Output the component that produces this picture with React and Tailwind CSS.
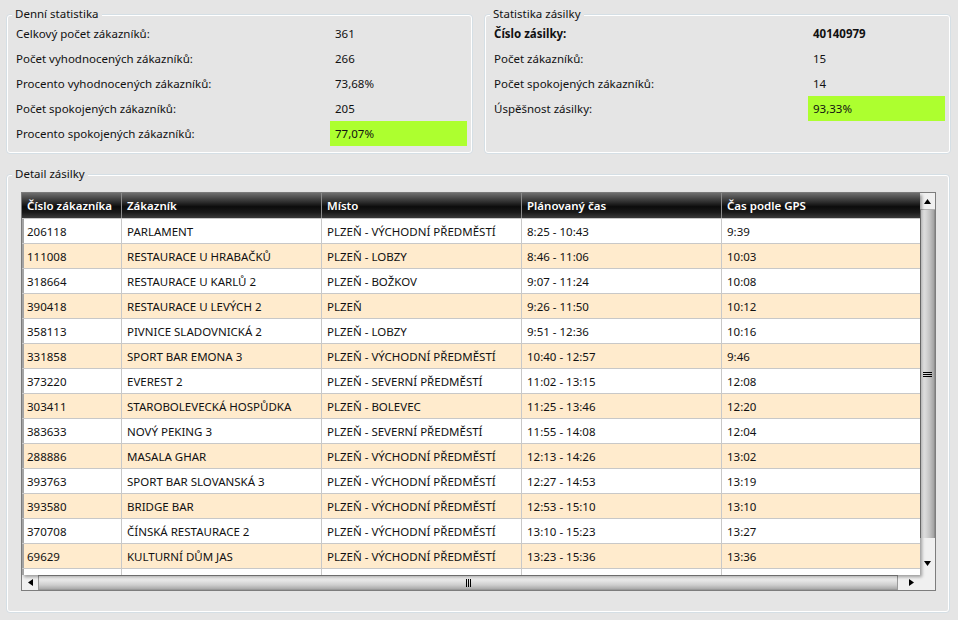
import React from "react";

const rows = [
  ["206118", "PARLAMENT", "PLZEŇ - VÝCHODNÍ PŘEDMĚSTÍ", "8:25 - 10:43", "9:39"],
  ["111008", "RESTAURACE U HRABAČKŮ", "PLZEŇ - LOBZY", "8:46 - 11:06", "10:03"],
  ["318664", "RESTAURACE U KARLŮ 2", "PLZEŇ - BOŽKOV", "9:07 - 11:24", "10:08"],
  ["390418", "RESTAURACE U LEVÝCH 2", "PLZEŇ", "9:26 - 11:50", "10:12"],
  ["358113", "PIVNICE SLADOVNICKÁ 2", "PLZEŇ - LOBZY", "9:51 - 12:36", "10:16"],
  ["331858", "SPORT BAR EMONA 3", "PLZEŇ - VÝCHODNÍ PŘEDMĚSTÍ", "10:40 - 12:57", "9:46"],
  ["373220", "EVEREST 2", "PLZEŇ - SEVERNÍ PŘEDMĚSTÍ", "11:02 - 13:15", "12:08"],
  ["303411", "STAROBOLEVECKÁ HOSPŮDKA", "PLZEŇ - BOLEVEC", "11:25 - 13:46", "12:20"],
  ["383633", "NOVÝ PEKING 3", "PLZEŇ - SEVERNÍ PŘEDMĚSTÍ", "11:55 - 14:08", "12:04"],
  ["288886", "MASALA GHAR", "PLZEŇ - VÝCHODNÍ PŘEDMĚSTÍ", "12:13 - 14:26", "13:02"],
  ["393763", "SPORT BAR SLOVANSKÁ 3", "PLZEŇ - VÝCHODNÍ PŘEDMĚSTÍ", "12:27 - 14:53", "13:19"],
  ["393580", "BRIDGE BAR", "PLZEŇ - VÝCHODNÍ PŘEDMĚSTÍ", "12:53 - 15:10", "13:10"],
  ["370708", "ČÍNSKÁ RESTAURACE 2", "PLZEŇ - VÝCHODNÍ PŘEDMĚSTÍ", "13:10 - 15:23", "13:27"],
  ["69629", "KULTURNÍ DŮM JAS", "PLZEŇ - VÝCHODNÍ PŘEDMĚSTÍ", "13:23 - 15:36", "13:36"],
  ["", "", "", "", ""],
];

function GroupBox({ title, className, children }) {
  return (
    <div className={`relative rounded-[4px] border border-[#d5dfe5] ${className}`}>
      <div className="h-full rounded-[3px] border border-white">{children}</div>
      <span className="absolute left-[5px] top-[-9px] bg-[#e5e5e5] px-[3px] text-[11.5px] leading-[16px] text-[#111]">
        {title}
      </span>
    </div>
  );
}

function StatRow({ label, value, green, bold }) {
  return (
    <div className={`flex h-[25px] items-center ${bold ? "font-bold" : ""}`}>
      <div className="w-[318px] shrink-0 pl-[4px] pt-[1px]">{label}</div>
      <div className={`flex h-full w-[137px] shrink-0 items-center pl-[5px] pt-[1px] ${green ? "bg-[#adff2f]" : ""}`}>{value}</div>
    </div>
  );
}

function Tri({ dir }) {
  const pts = {
    up: "0,5 7,5 3.5,0",
    down: "0,0 7,0 3.5,5",
    left: "5,0 5,7 0,3.5",
    right: "0,0 0,7 5,3.5",
  }[dir];
  const horiz = dir === "left" || dir === "right";
  return (
    <svg width={horiz ? 5 : 7} height={horiz ? 7 : 5} viewBox={horiz ? "0 0 5 7" : "0 0 7 5"}>
      <polygon points={pts} fill="#000" />
    </svg>
  );
}

const headers = ["Číslo zákazníka", "Zákazník", "Místo", "Plánovaný čas", "Čas podle GPS"];

function Table() {
  return (
    <div className="flex h-[399px] w-[915px] border border-[#7d7d7d] bg-[#f0f0f0]">
      <div className="flex w-[898px] shrink-0 flex-col">
        <div className="relative z-10 h-[382px] shrink-0 overflow-hidden bg-white shadow-[2px_2px_3px_rgba(0,0,0,0.35)]">
          <div className="flex h-[26px] border-b border-[#c8c8c8] bg-[linear-gradient(to_bottom,#6e6e6e_0%,#3c3c3c_28%,#0c0c0c_55%,#1a1a1a_78%,#3a3a3a_100%)] font-semibold text-white">
            <div className="flex w-[100px] shrink-0 items-center border-r border-[#8a8a8a] pl-[5px] pt-[1px]">{headers[0]}</div>
            <div className="flex w-[200px] shrink-0 items-center border-r border-[#8a8a8a] pl-[5px] pt-[1px]">{headers[1]}</div>
            <div className="flex w-[200px] shrink-0 items-center border-r border-[#8a8a8a] pl-[5px] pt-[1px]">{headers[2]}</div>
            <div className="flex w-[200px] shrink-0 items-center border-r border-[#8a8a8a] pl-[5px] pt-[1px]">{headers[3]}</div>
            <div className="flex flex-1 items-center pl-[5px] pt-[1px]">{headers[4]}</div>
          </div>
          {rows.map((r, i) => (
            <div
              key={i}
              className={`flex h-[25px] border-b border-[#c8c8c8] text-[#111] ${i % 2 ? "bg-[#ffebcd]" : "bg-white"}`}
            >
              <div className="flex w-[100px] shrink-0 items-center border-l-2 border-r border-l-[#a4a4a4] border-r-[#c8c8c8] pl-[3px] pt-[1px]">{r[0]}</div>
              <div className="flex w-[200px] shrink-0 items-center border-r border-[#c8c8c8] pl-[5px] pt-[1px]">{r[1]}</div>
              <div className="flex w-[200px] shrink-0 items-center border-r border-[#c8c8c8] pl-[5px] pt-[1px]">{r[2]}</div>
              <div className="flex w-[200px] shrink-0 items-center border-r border-[#c8c8c8] pl-[5px] pt-[1px]">{r[3]}</div>
              <div className="flex flex-1 items-center pl-[5px] pt-[1px]">{r[4]}</div>
            </div>
          ))}
        </div>
        <div className="flex h-[15px] shrink-0">
          <div className="flex w-[16px] shrink-0 items-center justify-center">
            <Tri dir="left" />
          </div>
          <div className="flex w-[860px] shrink-0 items-center justify-center gap-[1px] border border-[#9a9a9a] bg-[linear-gradient(to_bottom,#fafafa_0%,#e6e6e6_35%,#cdcdcd_70%,#a9a9a9_100%)]">
            <div className="h-[8px] w-[1px] bg-black" />
            <div className="h-[8px] w-[1px] bg-black" />
            <div className="h-[8px] w-[1px] bg-black" />
          </div>
          <div className="flex flex-1 items-center justify-center pl-[4px]">
            <Tri dir="right" />
          </div>
        </div>
      </div>
      <div className="flex w-[15px] shrink-0 flex-col">
        <div className="flex h-[17px] shrink-0 items-center justify-center border-b border-[#b0b0b0]">
          <Tri dir="up" />
        </div>
        <div className="flex h-[328px] shrink-0 flex-col items-center justify-center gap-[1px] border-x border-[#8f8f8f] bg-[linear-gradient(to_right,#f4f4f4_0%,#dcdcdc_30%,#c4c4c4_65%,#a2a2a2_100%)]">
          <div className="h-[1px] w-[9px] bg-black" />
          <div className="h-[1px] w-[9px] bg-black" />
          <div className="h-[1px] w-[9px] bg-black" />
        </div>
        <div className="flex h-[36px] shrink-0 items-end justify-center pb-[8px]">
          <Tri dir="down" />
        </div>
      </div>
    </div>
  );
}

export default function App() {
  return (
    <div className="h-[620px] w-[958px] overflow-hidden bg-[#e5e5e5] pl-[6px] pt-[14px] font-['Noto_Sans',sans-serif] text-[11.5px] text-[#111]">
      <div className="flex gap-[11px]">
        <GroupBox title="Denní statistika" className="h-[140px] w-[467px]">
          <div className="px-[4px] pt-[5px]">
            <StatRow label="Celkový počet zákazníků:" value="361" />
            <StatRow label="Počet vyhodnocených zákazníků:" value="266" />
            <StatRow label="Procento vyhodnocených zákazníků:" value="73,68%" />
            <StatRow label="Počet spokojených zákazníků:" value="205" />
            <StatRow label="Procento spokojených zákazníků:" value="77,07%" green />
          </div>
        </GroupBox>
        <GroupBox title="Statistika zásilky" className="h-[140px] w-[467px]">
          <div className="px-[4px] pt-[5px]">
            <StatRow label="Číslo zásilky:" value="40140979" bold />
            <StatRow label="Počet zákazníků:" value="15" />
            <StatRow label="Počet spokojených zákazníků:" value="14" />
            <StatRow label="Úspěšnost zásilky:" value="93,33%" green />
          </div>
        </GroupBox>
      </div>
      <GroupBox title="Detail zásilky" className="mt-[20px] h-[439px] w-[944px]">
        <div className="pl-[13px] pt-[16px]">
          <Table />
        </div>
      </GroupBox>
    </div>
  );
}
